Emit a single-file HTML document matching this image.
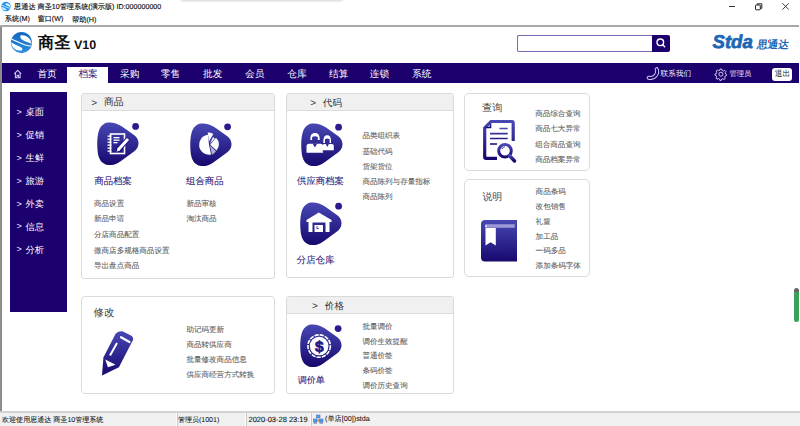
<!DOCTYPE html>
<html><head><meta charset="utf-8">
<style>
*{margin:0;padding:0;box-sizing:border-box}
html,body{width:800px;height:426px;overflow:hidden;background:#fff;font-family:"Liberation Sans",sans-serif;color:#333;text-rendering:geometricPrecision}
.a{position:absolute;white-space:nowrap}
svg.a{overflow:visible}
.nv{top:63px;height:20px;line-height:20px;font-size:10px;color:#fff}
.sd{left:16.5px;font-size:9.8px;line-height:14px;color:#fff}
.card{position:absolute;border:1px solid #dadada;border-radius:3px;background:#fff}
.hd{position:absolute;left:0;top:0;right:0;height:17px;background:#f0f0f0;border-bottom:1px solid #dcdcdc;border-radius:3px 3px 0 0}
.ht{font-size:10px;line-height:14px;color:#333}
.sm{font-size:8px;line-height:12px;color:#666}
.lb{font-size:9.3px;line-height:12px;color:#35247a}
.tt{font-size:10.5px;line-height:14px;color:#444}
.st{top:413px;font-size:7.2px;line-height:13px;color:#222}
</style></head><body>
<svg class="a" width="0" height="0" style="left:0;top:0">
<defs>
<linearGradient id="g" x1="0" y1="0" x2="0" y2="1"><stop offset="0" stop-color="#4848b4"/><stop offset="1" stop-color="#16086e"/></linearGradient>
<path id="blob" d="M11,0.5 C16,0 20,1.5 25,4.5 L37,13 C43,17.5 43,25 37,29.5 L24,39 C19,42.5 15,43.5 11,43 C4,42 1,36 0.5,28 C0,22 0,16 1.5,10 C3,4 7,1 11,0.5 Z"/>
</defs></svg>

<!-- title bar -->
<div class="a" style="left:181px;top:-3px;width:162px;height:3px;background:#bdbdbd;border-radius:0 0 4px 4px;box-shadow:0 0 2.5px 1px rgba(0,0,0,0.18)"></div>
<svg class="a" style="left:0;top:0" width="14" height="14"><g transform="translate(6,6.6) scale(0.45) translate(-12.5,-12.6)">
<circle cx="12.5" cy="12.6" r="10.6" fill="#1f95ee"/>
<path d="M11.8,5.3 C17,4.3 21.8,8.2 22.6,13.8 C19.5,12.6 16,11.6 13.2,9.8 C11.2,8.5 10.8,6.2 11.8,5.3 Z" fill="#fff" fill-opacity="0.85"/>
<path d="M2.1,12.2 C2.5,17.5 6.5,21.2 13,20.5 C14,19.5 13.2,17.8 11,16.8 C8,15.5 5,14 2.1,12.2 Z" fill="#fff" fill-opacity="0.85"/>
<path d="M2.5,9 C6,10.8 10,12.5 13.5,14 C16.5,15.3 19.5,16 22,16" fill="none" stroke="#fff" stroke-width="1.6"/>
</g></svg>
<div class="a" style="left:729px;top:6px;width:6px;height:1px;background:#333"></div>
<svg class="a" style="left:754px;top:2px" width="10" height="10"><rect x="1.5" y="3" width="4.8" height="4.8" rx="0.6" fill="none" stroke="#222" stroke-width="1"/><path d="M3.2,2.8 V1.8 H7.8 V6.3 H6.6" fill="none" stroke="#222" stroke-width="1"/></svg>
<svg class="a" style="left:781px;top:2px" width="10" height="10"><path d="M1.5,1.3 L7.7,7.5 M7.7,1.3 L1.5,7.5" stroke="#222" stroke-width="0.9"/></svg>
<div class="a" style="left:0;top:25px;width:799px;height:2px;background:#a8a8a8"></div>
<div class="a" style="left:0;top:27px;width:2px;height:385px;background:#8c8c8c"></div>

<!-- header -->
<svg class="a" style="left:9px;top:30px" width="25" height="25">
<defs><linearGradient id="lg" x1="0" y1="0" x2="0" y2="1"><stop offset="0" stop-color="#1268c2"/><stop offset="1" stop-color="#2b8fe0"/></linearGradient></defs>
<circle cx="12.5" cy="12.6" r="10.6" fill="url(#lg)"/>
<path d="M11.8,5.3 C17,4.3 21.8,8.2 22.6,13.8 C19.5,12.6 16,11.6 13.2,9.8 C11.2,8.5 10.8,6.2 11.8,5.3 Z" fill="#fff"/>
<path d="M2.1,12.2 C2.5,17.5 6.5,21.2 13,20.5 C14,19.5 13.2,17.8 11,16.8 C8,15.5 5,14 2.1,12.2 Z" fill="#fff"/>
<path d="M2.5,9 C6,10.8 10,12.5 13.5,14 C16.5,15.3 19.5,16 22,16" fill="none" stroke="#fff" stroke-width="1.1"/>
</svg>
<div class="a" style="left:517px;top:35px;width:136px;height:17px;border:1px solid #7a68b4;border-radius:2px 0 0 2px;border-right:none"></div>
<div class="a" style="left:652px;top:35px;width:18px;height:17px;background:#1b006e;border-radius:0 2px 2px 0"></div>
<svg class="a" style="left:652px;top:35px" width="18" height="17"><circle cx="8.3" cy="7.3" r="3.3" fill="none" stroke="#fff" stroke-width="1.4"/><path d="M10.5,9.6 L12.6,11.8" stroke="#fff" stroke-width="1.5" stroke-linecap="round"/></svg>

<!-- nav -->
<div class="a" style="left:2px;top:63px;width:797px;height:20px;background:#1b006e"></div>
<div class="a" style="left:67px;top:67px;width:41px;height:16px;background:#fff"></div>
<svg class="a" style="left:12px;top:68px" width="12" height="12"><path d="M2.2,5.9 L5.7,2.4 L9.2,5.9" fill="none" stroke="#cbc4f2" stroke-width="1.2" stroke-linejoin="round"/><path d="M3.4,5 V9.6 H5 V7.2 H6.5 V9.6 H8.1 V5" fill="none" stroke="#cbc4f2" stroke-width="1.1"/></svg>
<svg class="a" style="left:644px;top:65px" width="20" height="18"><path d="M12.6,4.2 C14.6,8.5 10.8,14 4.6,12.8" fill="none" stroke="#cfc8f0" stroke-width="4" stroke-linecap="round"/><path d="M12.6,4.2 C14.6,8.5 10.8,14 4.6,12.8" fill="none" stroke="#1b006e" stroke-width="2" stroke-linecap="round"/></svg>
<svg class="a" style="left:714px;top:67px" width="14" height="14"><g transform="translate(6.9,7.2) scale(0.88)" fill="none" stroke="#e0dcf6" stroke-width="1.05"><circle r="2.3"/><path d="M-1,-5.8 L1,-5.8 L1.4,-4.3 L2.9,-3.6 L4.3,-4.5 L5.7,-3.1 L4.8,-1.7 L5.4,-0.2 L6.3,0.2 L6.3,1.6 L4.9,2 L4.3,3.4 L5,4.8 L3.6,6 L2.2,5.1 L0.8,5.6 L0.4,7 L-1.2,7 L-1.6,5.5 L-3,4.9 L-4.4,5.8 L-5.6,4.4 L-4.8,3 L-5.3,1.6 L-6.6,1.2 L-6.6,-0.3 L-5.2,-0.7 L-4.6,-2.2 L-5.3,-3.5 L-4,-4.8 L-2.6,-4 L-1.3,-4.5 Z"/></g></svg>

<div class="a" style="left:772px;top:67.5px;width:19.5px;height:13.5px;background:#fff;border-radius:3px"></div>

<!-- sidebar -->
<div class="a" style="left:10px;top:92px;width:57px;height:220px;background:#1b006e"></div>

<div class="a" style="left:16.6px;top:105.2px;font-size:9px;line-height:14px;color:#f4f2fc">&gt;</div>
<div class="a" style="left:16.6px;top:128.2px;font-size:9px;line-height:14px;color:#f4f2fc">&gt;</div>
<div class="a" style="left:16.6px;top:151.0px;font-size:9px;line-height:14px;color:#f4f2fc">&gt;</div>
<div class="a" style="left:16.6px;top:173.8px;font-size:9px;line-height:14px;color:#f4f2fc">&gt;</div>
<div class="a" style="left:16.6px;top:196.8px;font-size:9px;line-height:14px;color:#f4f2fc">&gt;</div>
<div class="a" style="left:16.6px;top:219.3px;font-size:9px;line-height:14px;color:#f4f2fc">&gt;</div>
<div class="a" style="left:16.6px;top:242.3px;font-size:9px;line-height:14px;color:#f4f2fc">&gt;</div>

<!-- card 1 -->
<div class="card" style="left:81px;top:93px;width:194px;height:186px"><div class="hd"></div></div>
<svg class="a" style="left:96.5px;top:122px" width="46" height="46"><use href="#blob" fill="url(#g)"/><circle cx="38.6" cy="4.4" r="3.4" fill="#2a1c8c"/>
<g fill="none" stroke="#fff"><rect x="13.5" y="12" width="14" height="19.5" stroke-width="1.6"/></g>
<g fill="#fff"><rect x="10.5" y="13.5" width="4" height="1.3"/><rect x="10.5" y="16.5" width="4" height="1.3"/><rect x="10.5" y="19.5" width="4" height="1.3"/><rect x="10.5" y="22.5" width="4" height="1.3"/><rect x="10.5" y="25.5" width="4" height="1.3"/><rect x="10.5" y="28.5" width="4" height="1.3"/>
<rect x="16.5" y="15" width="6" height="1.3"/><rect x="16.5" y="17.5" width="6" height="1.3"/><rect x="16.5" y="20" width="4" height="1.3"/></g>
<path d="M31,17 L20.5,28.5" stroke="#1e1080" stroke-width="5"/><path d="M31,17 L21,28" stroke="#fff" stroke-width="3"/><path d="M19.5,29.8 L21,26.5 L22.8,28.2 Z" fill="#fff"/>
</svg>
<svg class="a" style="left:189.5px;top:122.5px" width="46" height="46"><use href="#blob" fill="url(#g)"/><circle cx="37.6" cy="3.8" r="3.4" fill="#2a1c8c"/>
<g fill="#fff"><path d="M19,21.8 L17.95,11.85 A10,10 0 1 0 21.08,31.58 Z"/>
<path d="M19,18.5 L17.7,9.6 A11,11 0 0 1 23.3,10.9 Z"/>
<path d="M19.8,21 L23,13.9 L24.8,15.5 Z"/>
<path d="M20.2,21.8 L26,14.8 A9.2,9.2 0 0 1 26.6,27.6 Z"/>
<path d="M20,22.5 L26,28.3 A10,10 0 0 1 22,31.8 Z" fill-opacity="0.65"/></g>
</svg>

<!-- card 2 -->
<div class="card" style="left:286px;top:93px;width:168px;height:185px"><div class="hd"></div></div>
<svg class="a" style="left:300.5px;top:122.5px" width="46" height="46"><use href="#blob" fill="url(#g)"/><circle cx="37.6" cy="4.2" r="3.4" fill="#2a1c8c"/>
<g fill="#fff">
<path d="M21.5,27.5 V23 C21.5,21.8 22.3,21 23.5,21 H30.8 C32,21 32.8,21.8 32.8,23 V27.5 Z"/>
<path d="M22.4,19.9 C22,14 24,12.3 26.2,12.3 C28.4,12.3 30.4,14 30,19.9 L28.6,19.9 L28.6,16.3 C27,15.3 25.4,15.3 24,16.3 L24,19.9 Z"/>
<path d="M5.5,29.8 V23.2 C5.5,21.8 6.5,20.7 8,20.7 H19.6 C21.1,20.7 22.1,21.8 22.1,23.2 V29.8 Z"/>
<path d="M9.4,17.1 C9,11 11.5,10 14,10 C16.5,10 19,11 18.7,17.1 L16.8,17.1 L16.8,14 C15,13 13,13 11.1,14 L11.1,17.1 Z"/>
</g>
<g fill="#2f2896"><path d="M11.6,20.5 L16.2,20.5 L13.9,24.4 Z"/><path d="M24.6,20.8 L28,20.8 L26.3,24.1 Z"/><rect x="21.5" y="27.5" width="11.3" height="0.9" fill="#2a2090"/></g>
</svg>
<svg class="a" style="left:299.5px;top:202.3px" width="46" height="46"><use href="#blob" fill="url(#g)"/><circle cx="38.6" cy="4.2" r="3.4" fill="#2a1c8c"/>
<path d="M6.5,18 L18.8,10.5 L31.5,18 L31.5,20 L29.5,20 L29.5,30 L25.5,30 L25.5,20.5 L12.5,20.5 L12.5,30 L8.5,30 L8.5,20 L6.5,20 Z" fill="#fff"/>
<rect x="14.5" y="23" width="8.5" height="7" fill="#fff"/><path d="M16.5,26.5 H19 M17,24 V26" stroke="#27179a" stroke-width="0.8"/>
</svg>

<!-- card 3 查询 -->
<div class="card" style="left:464px;top:93px;width:126px;height:78px;border-radius:5px"></div>
<svg class="a" style="left:476px;top:114px" width="50" height="55"><g fill="none" stroke="url(#g)">
<path d="M21,44.3 H10 C9,44.3 8.7,44 8.7,43 V14 L15,7.5 H36 C37,7.5 37.2,8 37.2,9 V27" stroke-width="3.2"/>
<path d="M14.5,8.5 V13.5 H9.5" stroke-width="1.6"/>
<path d="M23.5,14.5 H31.7 M14,19.6 H31.7 M14,24.5 H31.7 M14,30 H21" stroke-width="1.6"/>
<circle cx="29" cy="36.8" r="6.3" stroke-width="3"/><path d="M33.5,41.5 L38.5,47" stroke-width="3.4" stroke-linecap="round"/>
<path d="M26,35 C26.5,33.5 27.5,33 29,32.8" stroke-width="1"/>
</g></svg>

<!-- card 4 说明 -->
<div class="card" style="left:464px;top:179px;width:126px;height:98px;border-radius:5px"></div>
<svg class="a" style="left:474px;top:206px" width="50" height="60">
<path d="M11,14 H43 V55.6 H11 C8.5,55.6 7,54 7,51.5 V18 C7,15.5 8.5,14 11,14 Z" fill="url(#g)"/>
<path d="M13,18.3 H40.8 V21.8 H13 C11.5,21.8 11,21 11,20 C11,19 11.5,18.3 13,18.3 Z" fill="#9c9ad6"/>
<path d="M12.4,18.3 C11,18.8 10.8,21.5 12.4,21.8 Z" fill="#fff"/>
<path d="M11.5,22 H21.8 V39.4 L16.6,36.3 L11.5,39.4 Z" fill="#fff"/>
</svg>

<!-- card 5 修改 -->
<div class="card" style="left:81px;top:296px;width:194px;height:98px;border-radius:4px"></div>
<svg class="a" style="left:0;top:0" width="1" height="1">
<path d="M115.6,333.7 Q119,330.5 123,331.5 L130,335 Q134,337 133,340 L118.9,367.3 L102,375.6 L103.4,357.6 Z" fill="url(#gp)"/>
<path d="M121,337.2 L129.5,342" stroke="#fff" stroke-width="2.2" stroke-linecap="round"/>
<path d="M117,343 L110,355.5" stroke="#fff" stroke-width="2"/>
<path d="M105.3,359.5 L115.6,364.7 L107.9,367.3 Z" fill="#fff"/>
<defs><linearGradient id="gp" gradientUnits="userSpaceOnUse" x1="0" y1="331" x2="0" y2="376"><stop offset="0" stop-color="#4848b4"/><stop offset="1" stop-color="#16086e"/></linearGradient></defs>
</svg>

<!-- card 6 价格 -->
<div class="card" style="left:286px;top:296px;width:168px;height:98px"><div class="hd"></div></div>
<svg class="a" style="left:300px;top:323.6px" width="46" height="46"><use href="#blob" fill="url(#g)"/><circle cx="38.1" cy="4.6" r="3.4" fill="#2a1c8c"/>
<circle cx="19.15" cy="22.05" r="11.2" fill="none" stroke="#fff" stroke-width="1.6" stroke-dasharray="4.2 1.1"/>
<circle cx="19.15" cy="22.05" r="9.3" fill="#fff"/>
<text x="19.2" y="27.6" text-anchor="middle" font-family="Liberation Sans" font-weight="bold" font-size="15.5" fill="#22148a" stroke="#22148a" stroke-width="0.7">$</text>
</svg>

<!-- status -->
<div class="a" style="left:0;top:411px;width:800px;height:2px;background:#d2d2d2"></div>
<div class="a" style="left:0;top:413px;width:800px;height:13px;background:#f0f0f0"></div>
<div class="a" style="left:176px;top:413px;width:1px;height:13px;background:#fff"></div>
<div class="a" style="left:177px;top:413px;width:1px;height:13px;background:#c8c8c8"></div>
<div class="a" style="left:245px;top:413px;width:1px;height:13px;background:#fff"></div>
<div class="a" style="left:246px;top:413px;width:1px;height:13px;background:#c8c8c8"></div>
<div class="a" style="left:310px;top:413px;width:1px;height:13px;background:#fff"></div>
<div class="a" style="left:311px;top:413px;width:1px;height:13px;background:#c8c8c8"></div>
<svg class="a" style="left:312px;top:414px" width="12" height="11"><g fill="#3aa8f0" stroke="#6a6ac0" stroke-width="0.6"><rect x="4.5" y="1" width="3.5" height="3"/><rect x="1.5" y="5" width="3.5" height="3"/><rect x="7.5" y="5" width="3.5" height="3"/></g><circle cx="6.2" cy="6.5" r="0.9" fill="#d08020"/><g fill="#6060a0"><rect x="1.5" y="8.5" width="3.5" height="1"/><rect x="7.5" y="8.5" width="3.5" height="1"/></g></svg>

<div class="a" id="t0" style="left:14.10px;top:0.75px;font-size:7.15px;line-height:13px;color:#111;-webkit-text-stroke:0.15px #111">思通达 商圣10管理系统(演示版) ID:000000000</div>
<div class="a" id="t1" style="left:4.75px;top:12.90px;font-size:7.20px;line-height:12px;color:#111;-webkit-text-stroke:0.15px #111">系统(M)</div>
<div class="a" id="t2" style="left:37.70px;top:12.90px;font-size:7.08px;line-height:12px;color:#111;-webkit-text-stroke:0.15px #111">窗口(W)</div>
<div class="a" id="t3" style="left:72.00px;top:14.40px;font-size:7.22px;line-height:12px;color:#111;-webkit-text-stroke:0.15px #111">帮助(H)</div>
<div class="a" id="t4" style="left:38.00px;top:32.00px;font-size:16.14px;line-height:22px;color:#111;font-weight:bold">商圣</div>
<div class="a" id="t5" style="left:74.00px;top:36.50px;font-size:12.50px;line-height:16px;color:#111;font-weight:bold">V10</div>
<div class="a" id="t6" style="left:712.50px;top:33.20px;font-size:18.57px;line-height:18px;color:#1d66b4;font-weight:bold;font-style:italic;-webkit-text-stroke:0.7px #1d66b4">Stda</div>
<div class="a" id="t7" style="left:756.80px;top:39.15px;font-size:10.48px;line-height:14px;color:#1d66b4;font-weight:bold;transform:skewX(-8deg)">思通达</div>
<div class="a" id="t8" style="left:37.40px;top:64.80px;font-size:9.70px;line-height:20px;color:#fff">首页</div>
<div class="a" id="t9" style="left:78.40px;top:64.80px;font-size:9.70px;line-height:20px;color:#2a1a80">档案</div>
<div class="a" id="t10" style="left:120.00px;top:64.80px;font-size:9.70px;line-height:20px;color:#fff">采购</div>
<div class="a" id="t11" style="left:160.75px;top:64.80px;font-size:9.70px;line-height:20px;color:#fff">零售</div>
<div class="a" id="t12" style="left:203.00px;top:64.80px;font-size:9.70px;line-height:20px;color:#fff">批发</div>
<div class="a" id="t13" style="left:245.00px;top:64.80px;font-size:9.70px;line-height:20px;color:#fff">会员</div>
<div class="a" id="t14" style="left:287.20px;top:64.80px;font-size:9.70px;line-height:20px;color:#fff">仓库</div>
<div class="a" id="t15" style="left:329.00px;top:64.80px;font-size:9.70px;line-height:20px;color:#fff">结算</div>
<div class="a" id="t16" style="left:369.80px;top:64.80px;font-size:9.70px;line-height:20px;color:#fff">连锁</div>
<div class="a" id="t17" style="left:412.00px;top:64.80px;font-size:9.70px;line-height:20px;color:#fff">系统</div>
<div class="a" id="t18" style="left:660.40px;top:64.25px;font-size:7.68px;line-height:20px;color:#f0eefa">联系我们</div>
<div class="a" id="t19" style="left:729.40px;top:64.25px;font-size:7.32px;line-height:20px;color:#f0eefa">管理员</div>
<div class="a" id="t20" style="left:774.80px;top:68.45px;font-size:7.67px;line-height:12px;color:#222">退出</div>
<div class="a" id="t21" style="left:25.50px;top:105.40px;font-size:9.30px;line-height:14px;color:#fff">桌面</div>
<div class="a" id="t22" style="left:25.50px;top:128.40px;font-size:9.30px;line-height:14px;color:#fff">促销</div>
<div class="a" id="t23" style="left:25.50px;top:151.20px;font-size:9.30px;line-height:14px;color:#fff">生鲜</div>
<div class="a" id="t24" style="left:25.50px;top:174.00px;font-size:9.30px;line-height:14px;color:#fff">旅游</div>
<div class="a" id="t25" style="left:25.50px;top:197.00px;font-size:9.30px;line-height:14px;color:#fff">外卖</div>
<div class="a" id="t26" style="left:25.50px;top:219.50px;font-size:9.30px;line-height:14px;color:#fff">信息</div>
<div class="a" id="t27" style="left:25.50px;top:242.50px;font-size:9.30px;line-height:14px;color:#fff">分析</div>
<div class="a" id="t28" style="left:91.30px;top:96.50px;font-size:10.00px;line-height:14px;color:#333">&gt;</div>
<div class="a" id="t29" style="left:104.00px;top:96.35px;font-size:9.85px;line-height:14px;color:#333">商品</div>
<div class="a" id="t30" style="left:310.20px;top:96.50px;font-size:10.00px;line-height:14px;color:#333">&gt;</div>
<div class="a" id="t31" style="left:322.80px;top:96.80px;font-size:9.65px;line-height:14px;color:#333">代码</div>
<div class="a" id="t32" style="left:312.10px;top:300.10px;font-size:10.00px;line-height:14px;color:#333">&gt;</div>
<div class="a" id="t33" style="left:324.80px;top:300.00px;font-size:9.61px;line-height:14px;color:#333">价格</div>
<div class="a" id="t34" style="left:482.10px;top:101.60px;font-size:10.17px;line-height:14px;color:#444">查询</div>
<div class="a" id="t35" style="left:482.40px;top:190.50px;font-size:9.94px;line-height:14px;color:#444">说明</div>
<div class="a" id="t36" style="left:93.50px;top:306.90px;font-size:10.48px;line-height:14px;color:#444">修改</div>
<div class="a" id="t37" style="left:94.50px;top:175.00px;font-size:9.36px;line-height:12px;color:#30207a;-webkit-text-stroke:0.08px #30207a">商品档案</div>
<div class="a" id="t38" style="left:186.10px;top:174.80px;font-size:9.40px;line-height:12px;color:#30207a;-webkit-text-stroke:0.08px #30207a">组合商品</div>
<div class="a" id="t39" style="left:297.10px;top:175.10px;font-size:9.39px;line-height:12px;color:#30207a;-webkit-text-stroke:0.08px #30207a">供应商档案</div>
<div class="a" id="t40" style="left:296.70px;top:254.90px;font-size:9.46px;line-height:12px;color:#30207a;-webkit-text-stroke:0.08px #30207a">分店仓库</div>
<div class="a" id="t41" style="left:297.70px;top:374.20px;font-size:9.07px;line-height:12px;color:#30207a;-webkit-text-stroke:0.08px #30207a">调价单</div>
<div class="a" id="t42" style="left:94.00px;top:197.70px;font-size:7.56px;line-height:12px;color:#606060;-webkit-text-stroke:0.08px #606060">商品设置</div>
<div class="a" id="t43" style="left:94.00px;top:213.40px;font-size:7.56px;line-height:12px;color:#606060;-webkit-text-stroke:0.08px #606060">新品申请</div>
<div class="a" id="t44" style="left:94.00px;top:228.90px;font-size:7.56px;line-height:12px;color:#606060;-webkit-text-stroke:0.08px #606060">分店商品配置</div>
<div class="a" id="t45" style="left:94.00px;top:244.90px;font-size:7.56px;line-height:12px;color:#606060;-webkit-text-stroke:0.08px #606060">微商店多规格商品设置</div>
<div class="a" id="t46" style="left:94.00px;top:260.20px;font-size:7.56px;line-height:12px;color:#606060;-webkit-text-stroke:0.08px #606060">导出盘点商品</div>
<div class="a" id="t47" style="left:186.40px;top:197.50px;font-size:7.56px;line-height:12px;color:#606060;-webkit-text-stroke:0.08px #606060">新品审核</div>
<div class="a" id="t48" style="left:186.40px;top:213.00px;font-size:7.56px;line-height:12px;color:#606060;-webkit-text-stroke:0.08px #606060">淘汰商品</div>
<div class="a" id="t49" style="left:362.40px;top:129.90px;font-size:7.56px;line-height:12px;color:#606060;-webkit-text-stroke:0.08px #606060">品类组织表</div>
<div class="a" id="t50" style="left:362.40px;top:145.70px;font-size:7.56px;line-height:12px;color:#606060;-webkit-text-stroke:0.08px #606060">基础代码</div>
<div class="a" id="t51" style="left:362.40px;top:161.10px;font-size:7.56px;line-height:12px;color:#606060;-webkit-text-stroke:0.08px #606060">货架货位</div>
<div class="a" id="t52" style="left:362.40px;top:176.20px;font-size:7.56px;line-height:12px;color:#606060;-webkit-text-stroke:0.08px #606060">商品陈列与存量指标</div>
<div class="a" id="t53" style="left:362.40px;top:191.40px;font-size:7.56px;line-height:12px;color:#606060;-webkit-text-stroke:0.08px #606060">商品陈列</div>
<div class="a" id="t54" style="left:535.20px;top:107.70px;font-size:7.56px;line-height:12px;color:#606060;-webkit-text-stroke:0.08px #606060">商品综合查询</div>
<div class="a" id="t55" style="left:535.20px;top:123.30px;font-size:7.56px;line-height:12px;color:#606060;-webkit-text-stroke:0.08px #606060">商品七大异常</div>
<div class="a" id="t56" style="left:535.20px;top:138.70px;font-size:7.56px;line-height:12px;color:#606060;-webkit-text-stroke:0.08px #606060">组合商品查询</div>
<div class="a" id="t57" style="left:535.20px;top:154.30px;font-size:7.56px;line-height:12px;color:#606060;-webkit-text-stroke:0.08px #606060">商品档案异常</div>
<div class="a" id="t58" style="left:535.60px;top:186.30px;font-size:7.56px;line-height:12px;color:#606060;-webkit-text-stroke:0.08px #606060">商品条码</div>
<div class="a" id="t59" style="left:535.60px;top:201.00px;font-size:7.56px;line-height:12px;color:#606060;-webkit-text-stroke:0.08px #606060">改包销售</div>
<div class="a" id="t60" style="left:535.60px;top:215.60px;font-size:7.56px;line-height:12px;color:#606060;-webkit-text-stroke:0.08px #606060">礼篮</div>
<div class="a" id="t61" style="left:535.60px;top:230.70px;font-size:7.56px;line-height:12px;color:#606060;-webkit-text-stroke:0.08px #606060">加工品</div>
<div class="a" id="t62" style="left:535.60px;top:245.10px;font-size:7.56px;line-height:12px;color:#606060;-webkit-text-stroke:0.08px #606060">一码多品</div>
<div class="a" id="t63" style="left:535.60px;top:259.80px;font-size:7.56px;line-height:12px;color:#606060;-webkit-text-stroke:0.08px #606060">添加条码字体</div>
<div class="a" id="t64" style="left:186.40px;top:323.70px;font-size:7.56px;line-height:12px;color:#606060;-webkit-text-stroke:0.08px #606060">助记码更新</div>
<div class="a" id="t65" style="left:186.40px;top:338.70px;font-size:7.56px;line-height:12px;color:#606060;-webkit-text-stroke:0.08px #606060">商品转供应商</div>
<div class="a" id="t66" style="left:186.40px;top:353.70px;font-size:7.56px;line-height:12px;color:#606060;-webkit-text-stroke:0.08px #606060">批量修改商品信息</div>
<div class="a" id="t67" style="left:186.40px;top:369.10px;font-size:7.56px;line-height:12px;color:#606060;-webkit-text-stroke:0.08px #606060">供应商经营方式转换</div>
<div class="a" id="t68" style="left:362.40px;top:321.20px;font-size:7.56px;line-height:12px;color:#606060;-webkit-text-stroke:0.08px #606060">批量调价</div>
<div class="a" id="t69" style="left:362.40px;top:335.60px;font-size:7.56px;line-height:12px;color:#606060;-webkit-text-stroke:0.08px #606060">调价生效提醒</div>
<div class="a" id="t70" style="left:362.40px;top:350.40px;font-size:7.56px;line-height:12px;color:#606060;-webkit-text-stroke:0.08px #606060">普通价签</div>
<div class="a" id="t71" style="left:362.40px;top:365.10px;font-size:7.56px;line-height:12px;color:#606060;-webkit-text-stroke:0.08px #606060">条码价签</div>
<div class="a" id="t72" style="left:362.40px;top:379.50px;font-size:7.56px;line-height:12px;color:#606060;-webkit-text-stroke:0.08px #606060">调价历史查询</div>
<div class="a" id="t73" style="left:2.00px;top:413.60px;font-size:7.06px;line-height:13px;color:#111;-webkit-text-stroke:0.06px #111">欢迎使用思通达 商圣10管理系统</div>
<div class="a" id="t74" style="left:178.00px;top:413.60px;font-size:7.01px;line-height:13px;color:#111;-webkit-text-stroke:0.06px #111">管理员(1001)</div>
<div class="a" id="t75" style="left:248.50px;top:412.60px;font-size:7.50px;line-height:13px;color:#111;-webkit-text-stroke:0.1px #111">2020-03-28 23:19</div>
<div class="a" id="t76" style="left:325.00px;top:412.10px;font-size:7.20px;line-height:13px;color:#111;-webkit-text-stroke:0.06px #111">(单店[00])stda</div>
<div class="a" style="left:767.6px;top:39.6px;width:1.6px;height:2.4px;background:#e02020;border-radius:1px"></div>
<!-- scrollbar thumb -->
<div class="a" style="left:794px;top:288px;width:5px;height:34px;background:#3aa05a;border-radius:3px;border-top:4px solid #666"></div>
</body></html>
